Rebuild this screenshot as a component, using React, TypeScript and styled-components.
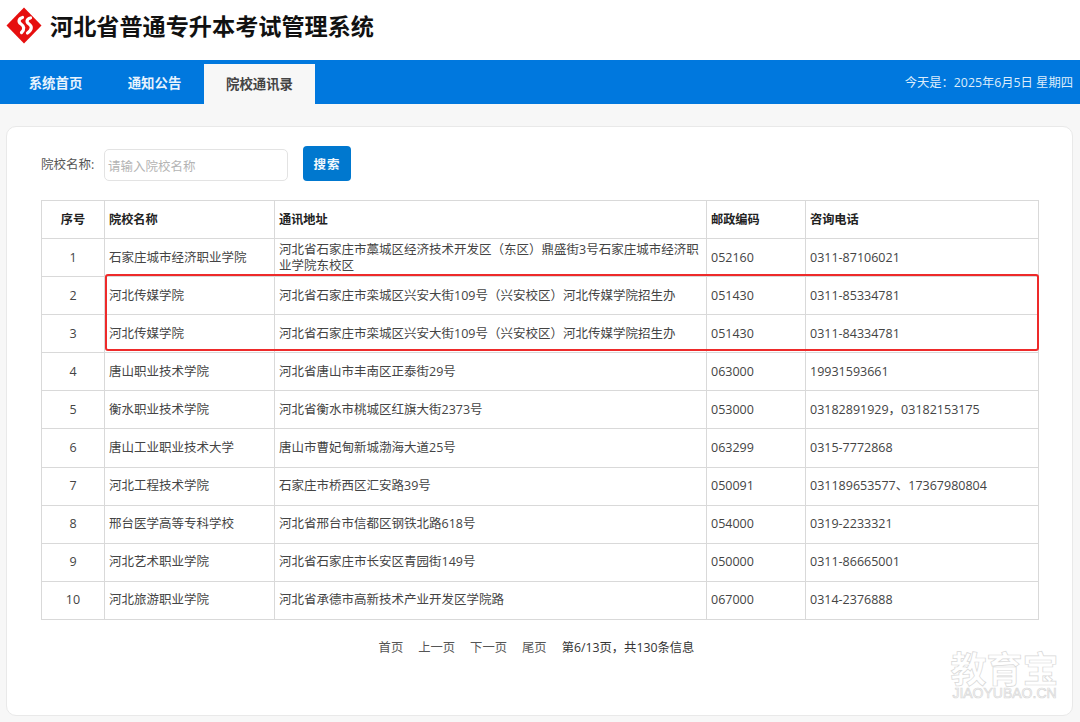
import React from "react";
import styled, { createGlobalStyle } from "styled-components";

const Global = createGlobalStyle`
  html, body { margin: 0; padding: 0; background: #f7f7f7; }
  body { font-family: "Open Sans", "Noto Sans CJK SC", sans-serif; color: #333; }
`;
const Page = styled.div`
  position: relative;
  width: 1080px;
  height: 722px;
  overflow: hidden;
  background: #f7f7f7;
`;
const Header = styled.header`
  box-sizing: border-box;
  height: 60px;
  background: #fff;
  display: flex;
  align-items: center;
  padding: 0 0 10px 6px;
  gap: 8px;
`;
const Title = styled.h1`
  margin: 0;
  font-size: 23.15px;
  font-weight: 700;
  color: #111;
  line-height: 1;
  position: relative;
  top: 2px;
`;
const Nav = styled.nav`
  height: 44px;
  background: #0078de;
  display: flex;
  align-items: flex-end;
  padding-left: 6px;
  box-sizing: border-box;
`;
const Tab = styled.a<{ $active?: boolean }>`
  box-sizing: border-box;
  height: ${(p) => (p.$active ? "40px" : "44px")};
  width: ${(p) => (p.$active ? "111px" : "99px")};
  padding-bottom: ${(p) => (p.$active ? "3px" : "0")};
  display: flex;
  align-items: center;
  justify-content: center;
  font-size: 13.4px;
  font-weight: 700;
  color: ${(p) => (p.$active ? "#444" : "#e8f3fd")};
  background: ${(p) => (p.$active ? "#f7f7f7" : "transparent")};
`;
const DateText = styled.div`
  margin-left: auto;
  align-self: center;
  padding-right: 7px;
  font-size: 12.3px;
  color: #dcecfb;
`;
const Card = styled.main`
  box-sizing: border-box;
  margin: 22px 0 0 6px;
  width: 1067px;
  height: 590px;
  background: #fff;
  border: 1px solid #e9e9e9;
  border-radius: 10px;
  padding: 19px 34px 0;
`;
const SearchBar = styled.form`
  display: flex;
  align-items: center;
  height: 35px;
  margin-bottom: 19px;
`;
const SearchLabel = styled.label`
  font-size: 12.5px;
  color: #555;
  width: 63px;
`;
const SearchInput = styled.div`
  box-sizing: border-box;
  width: 184px;
  height: 32px;
  margin-top: 3px;
  border: 1px solid #e3e3e3;
  border-radius: 5px;
  padding-left: 3px;
  display: flex;
  align-items: center;
  font-size: 12.5px;
  color: #b4b4b4;
`;
const SearchButton = styled.button`
  margin-left: 15px;
  width: 48px;
  height: 35px;
  border: 0;
  border-radius: 4px;
  background: #0078cf;
  color: #f2f8fd;
  font: 700 12.5px "Noto Sans CJK SC", sans-serif;
  letter-spacing: 1px;
  padding: 0;
`;
const Table = styled.table`
  border-collapse: collapse;
  table-layout: fixed;
  width: 997px;
  height: 420px;
  font-size: 12.5px;
`;
const Row = styled.tr`
  height: 38px;
`;
const Th = styled.th<{ $center?: boolean }>`
  border: 1px solid #d9d9d9;
  text-align: ${(p) => (p.$center ? "center" : "left")};
  padding: 0 4px;
  color: #222;
  font-weight: 700;
  font-size: 12.2px;
  line-height: 16px;
`;
const Td = styled.td<{ $center?: boolean }>`
  border: 1px solid #d9d9d9;
  text-align: ${(p) => (p.$center ? "center" : "left")};
  padding: 0 4px;
  color: #444;
  line-height: 16px;
`;
const Pager = styled.div`
  display: flex;
  justify-content: center;
  gap: 15px;
  margin-top: 18px;
  margin-left: -6px;
  font-size: 12.3px;
  color: #555;
`;
const PagerInfo = styled.span`
  color: #333;
`;
const Highlight = styled.div`
  position: absolute;
  left: 105px;
  top: 274px;
  width: 934px;
  height: 77px;
  box-sizing: border-box;
  border: 2px solid #ee2a2a;
  border-radius: 3px;
  pointer-events: none;
`;
const Watermark = styled.div`
  position: absolute;
  left: 950px;
  top: 648px;
  width: 109px;
  text-align: center;
  color: #fff;
  -webkit-text-stroke: 0.7px #d8d8d8;
  pointer-events: none;
`;
const WatermarkCn = styled.div`
  font-family: "Noto Sans CJK SC", sans-serif;
  font-size: 36px;
  line-height: 38px;
  font-weight: 700;
  white-space: nowrap;
`;
const WatermarkEn = styled.div`
  font-family: "Liberation Sans", sans-serif;
  font-size: 14px;
  line-height: 14px;
  white-space: nowrap;
`;

const rows = [
  ["1", "石家庄城市经济职业学院", "河北省石家庄市藁城区经济技术开发区（东区）鼎盛街3号石家庄城市经济职业学院东校区", "052160", "0311-87106021"],
  ["2", "河北传媒学院", "河北省石家庄市栾城区兴安大街109号（兴安校区）河北传媒学院招生办", "051430", "0311-85334781"],
  ["3", "河北传媒学院", "河北省石家庄市栾城区兴安大街109号（兴安校区）河北传媒学院招生办", "051430", "0311-84334781"],
  ["4", "唐山职业技术学院", "河北省唐山市丰南区正泰街29号", "063000", "19931593661"],
  ["5", "衡水职业技术学院", "河北省衡水市桃城区红旗大街2373号", "053000", "03182891929，03182153175"],
  ["6", "唐山工业职业技术大学", "唐山市曹妃甸新城渤海大道25号", "063299", "0315-7772868"],
  ["7", "河北工程技术学院", "石家庄市桥西区汇安路39号", "050091", "031189653577、17367980804"],
  ["8", "邢台医学高等专科学校", "河北省邢台市信都区钢铁北路618号", "054000", "0319-2233321"],
  ["9", "河北艺术职业学院", "河北省石家庄市长安区青园街149号", "050000", "0311-86665001"],
  ["10", "河北旅游职业学院", "河北省承德市高新技术产业开发区学院路", "067000", "0314-2376888"],
];

const Logo = () => (
  <svg width="36" height="37" viewBox="0 0 36 37">
    <path d="M18 0.5L35.5 18.5L18 36.5L0.5 18.5Z" fill="#e60f0f" />
    <path d="M16.5 10.5C12.5 11.5 12 15 15 17C18 19 19 22 15.5 25.5" fill="none" stroke="#fff" strokeWidth="3.2" strokeLinecap="round" />
    <path d="M24.5 11C20.5 12 20 15 23 17C26 19 26.5 22.5 21.5 26" fill="none" stroke="#fff" strokeWidth="3.2" strokeLinecap="round" />
  </svg>
);

export default function App() {
  return (
    <Page>
      <Global />
      <Header>
        <Logo />
        <Title>河北省普通专升本考试管理系统</Title>
      </Header>
      <Nav>
        <Tab>系统首页</Tab>
        <Tab>通知公告</Tab>
        <Tab $active>院校通讯录</Tab>
        <DateText>今天是：2025年6月5日 星期四</DateText>
      </Nav>
      <Card>
        <SearchBar>
          <SearchLabel>院校名称:</SearchLabel>
          <SearchInput>请输入院校名称</SearchInput>
          <SearchButton type="button">搜索</SearchButton>
        </SearchBar>
        <Table>
          <colgroup>
            <col width="63" />
            <col width="170" />
            <col width="432" />
            <col width="99" />
            <col width="233" />
          </colgroup>
          <thead>
            <Row>
              <Th $center>序号</Th>
              <Th>院校名称</Th>
              <Th>通讯地址</Th>
              <Th>邮政编码</Th>
              <Th>咨询电话</Th>
            </Row>
          </thead>
          <tbody>
            {rows.map((r) => (
              <Row key={r[0]}>
                <Td $center>{r[0]}</Td>
                <Td>{r[1]}</Td>
                <Td>{r[2]}</Td>
                <Td>{r[3]}</Td>
                <Td>{r[4]}</Td>
              </Row>
            ))}
          </tbody>
        </Table>
        <Pager>
          <span>首页</span>
          <span>上一页</span>
          <span>下一页</span>
          <span>尾页</span>
          <PagerInfo>第6/13页，共130条信息</PagerInfo>
        </Pager>
      </Card>
      <Highlight />
      <Watermark>
        <WatermarkCn>教育宝</WatermarkCn>
        <WatermarkEn>JIAOYUBAO.CN</WatermarkEn>
      </Watermark>
    </Page>
  );
}
